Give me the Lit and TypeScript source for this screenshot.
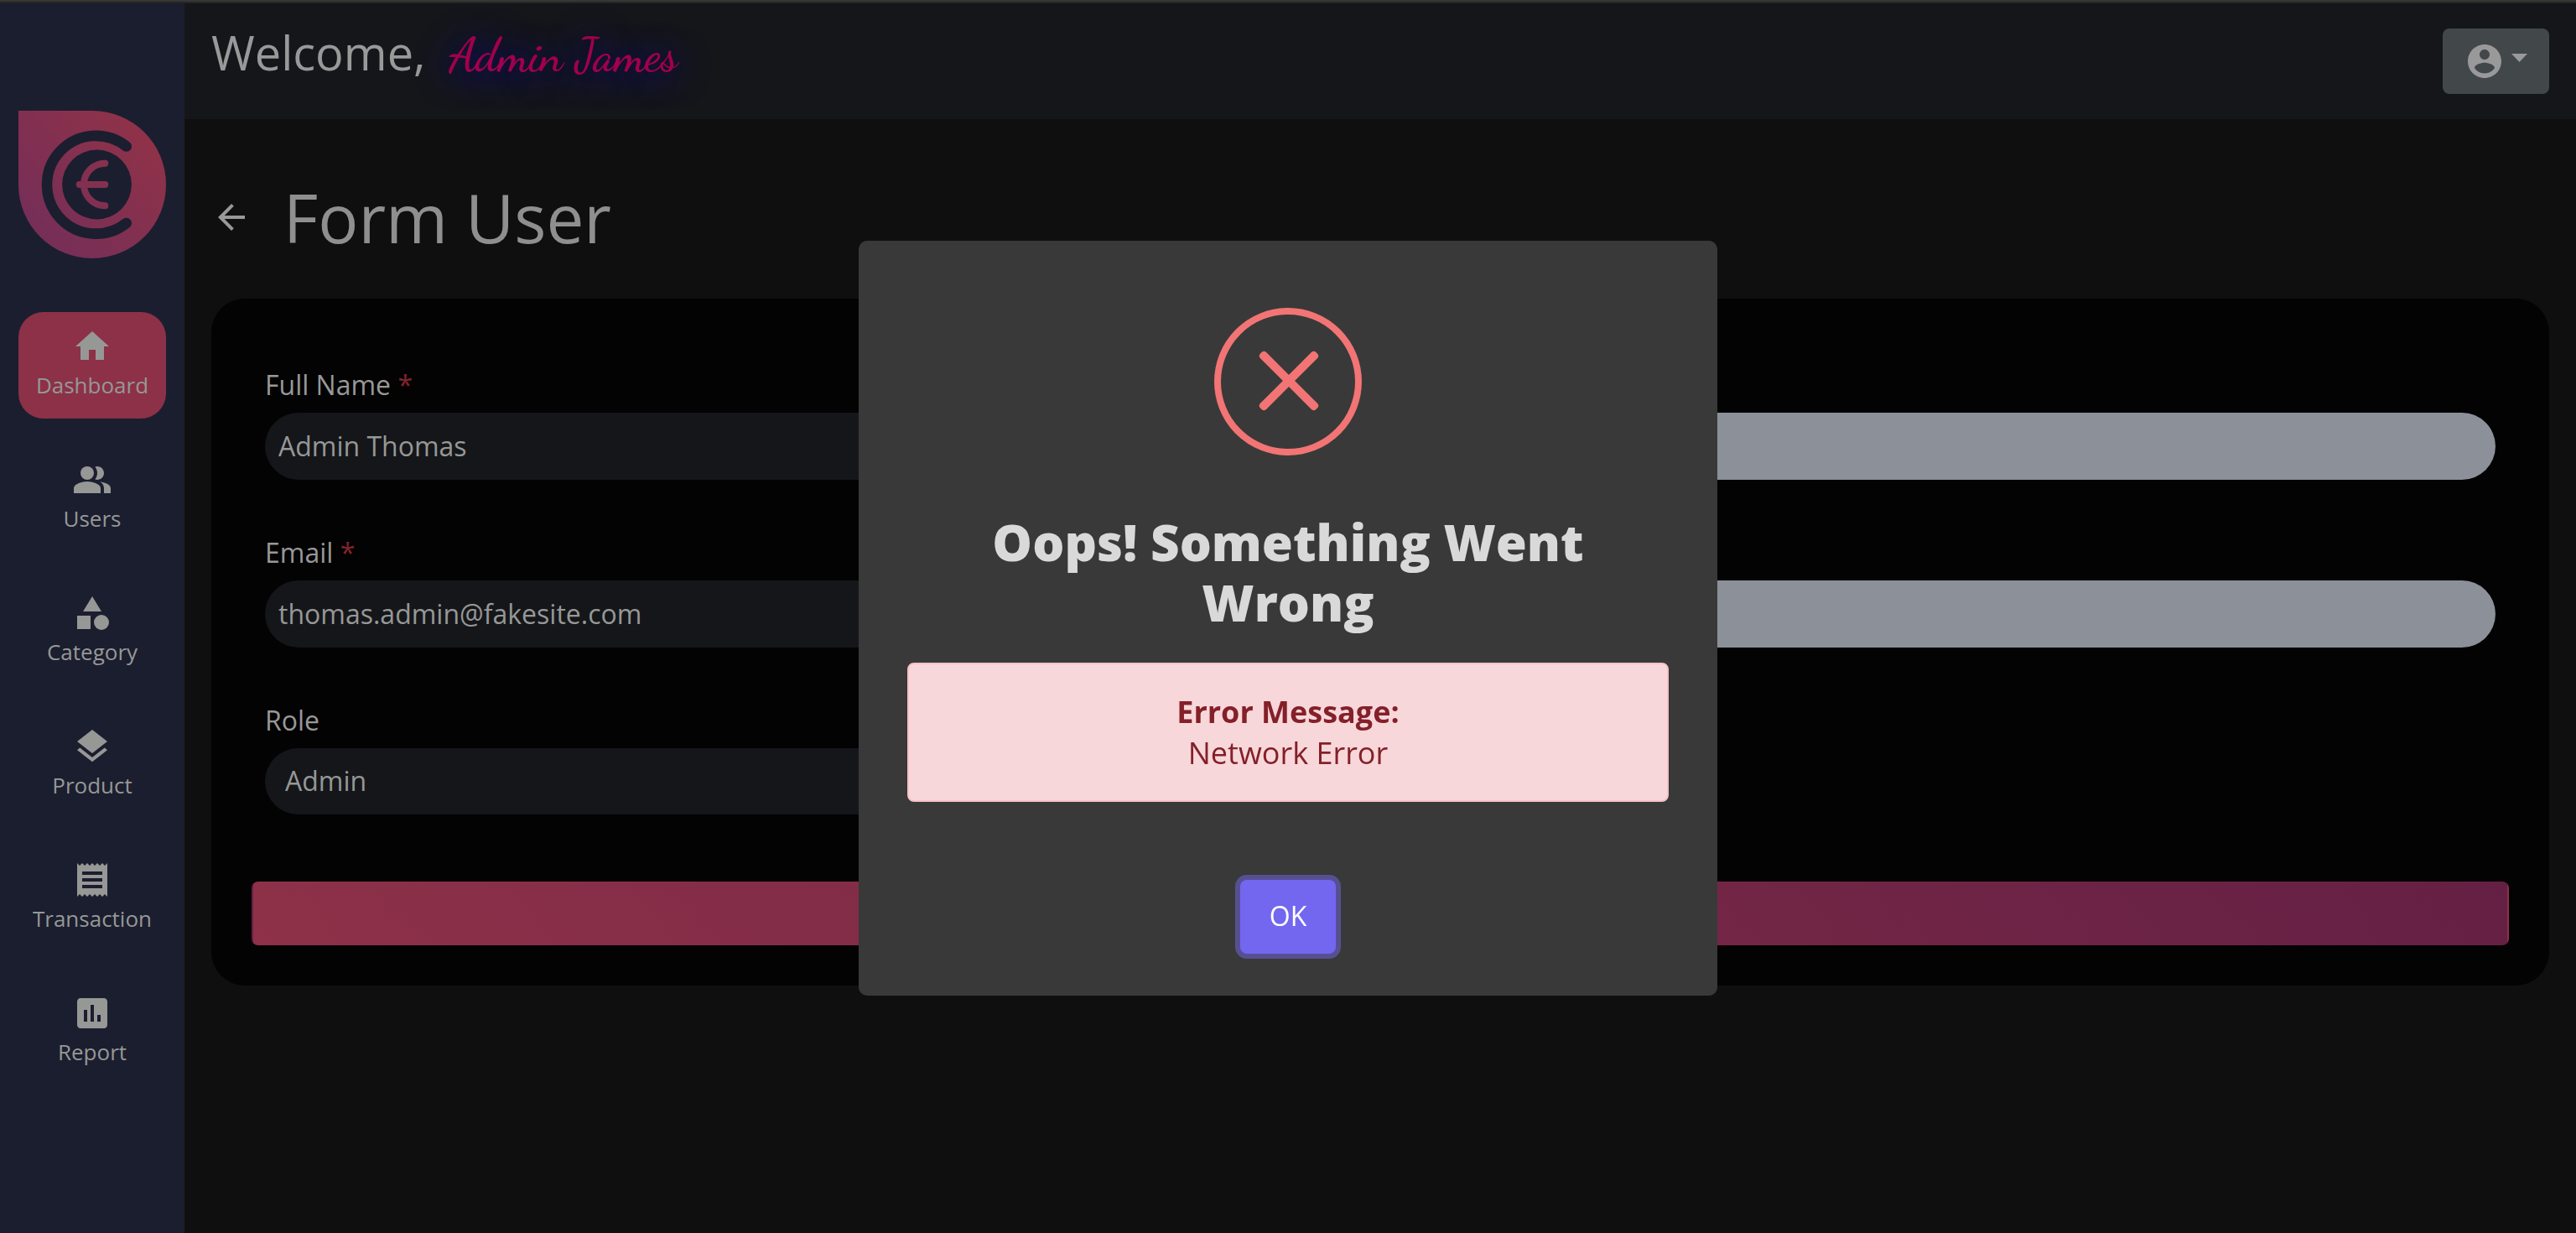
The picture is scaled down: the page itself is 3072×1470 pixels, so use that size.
import { LitElement, html, css, svg } from "lit";
import { customElement, property, state } from "lit/decorators.js";
import { classMap } from "lit/directives/class-map.js";

const icons: Record<string, unknown> = {
  home: svg`<path d="M10 20v-6h4v6h5v-8h3L12 3 2 12h3v8z"/>`,
  users: svg`<circle cx="9" cy="8" r="4"/><path d="M9 13c-2.67 0-8 1.34-8 4v3h16v-3c0-2.66-5.33-4-8-4z"/><path d="M16.67 13.13C18.04 14.06 19 15.32 19 17v3h4v-3c0-2.18-3.57-3.47-6.33-3.87z"/><path d="M15 12c2.21 0 4-1.79 4-4s-1.79-4-4-4c-.47 0-.91.1-1.33.24C14.5 5.27 15 6.58 15 8s-.5 2.73-1.33 3.76c.42.14.86.24 1.33.24z"/>`,
  category: svg`<path d="M12 2l-5.5 9h11z"/><circle cx="17.5" cy="17.5" r="4.5"/><path d="M3 13.5h8v8H3z"/>`,
  layers: svg`<path d="M11.99 18.54l-7.37-5.73L3 14.07l9 7 9-7-1.63-1.27-7.38 5.74zM12 16l7.36-5.73L21 9l-9-7-9 7 1.63 1.27L12 16z"/>`,
  receipt: svg`<path d="M18 17H6v-2h12v2zm0-4H6v-2h12v2zm0-4H6V7h12v2zM3 22l1.5-1.5L6 22l1.5-1.5L9 22l1.5-1.5L12 22l1.5-1.5L15 22l1.5-1.5L18 22l1.5-1.5L21 22V2l-1.5 1.5L18 2l-1.5 1.5L15 2l-1.5 1.5L12 2l-1.5 1.5L9 2 7.5 3.5 6 2 4.5 3.5 3 2v20z"/>`,
  report: svg`<path d="M19 3H5c-1.1 0-2 .9-2 2v14c0 1.1.9 2 2 2h14c1.1 0 2-.9 2-2V5c0-1.1-.9-2-2-2zM9 17H7v-7h2v7zm4 0h-2V7h2v10zm4 0h-2v-4h2v4z"/>`,
  account: svg`<path d="M12 2C6.48 2 2 6.48 2 12s4.48 10 10 10 10-4.48 10-10S17.52 2 12 2zm0 3c1.66 0 3 1.34 3 3s-1.34 3-3 3-3-1.34-3-3 1.34-3 3-3zm0 14.2c-2.5 0-4.71-1.28-6-3.22.03-1.99 4-3.08 6-3.08 1.99 0 5.97 1.09 6 3.08-1.29 1.94-3.5 3.22-6 3.22z"/>`,
  back: svg`<path d="M20 11H7.83l5.59-5.59L12 4l-8 8 8 8 1.41-1.41L7.83 13H20v-2z"/>`,
};

const icon = (name: string) =>
  html`<svg class="icon" viewBox="0 0 24 24" width="48" height="48" fill="currentColor" aria-hidden="true">${icons[name]}</svg>`;

@customElement("app-sidebar")
class AppSidebar extends LitElement {
  @property() active = "Dashboard";

  private items = [
    ["home", "Dashboard"],
    ["users", "Users"],
    ["category", "Category"],
    ["layers", "Product"],
    ["receipt", "Transaction"],
    ["report", "Report"],
  ];

  static styles = css`
    :host {
      display: block;
      box-sizing: border-box;
      padding: 128px 22px 0;
      background: #1b1e2f;
    }
    .logo {
      display: block;
      width: 100%;
    }
    .menu {
      display: flex;
      flex-direction: column;
      gap: 32px;
      margin-top: 64px;
    }
    .item {
      display: flex;
      flex-direction: column;
      align-items: center;
      box-sizing: border-box;
      height: 127px;
      padding-top: 17px;
      border-radius: 30px;
      color: #969896;
      font-size: 26px;
      line-height: 44px;
      text-decoration: none;
    }
    .item.active {
      background: #8c3148;
    }
    .icon {
      display: block;
      flex: none;
    }
  `;

  render() {
    return html`
      <svg class="logo" viewBox="0 0 176 176" role="img" aria-label="Logo">
        <defs>
          <linearGradient id="brand" x1="20" y1="150" x2="150" y2="30" gradientUnits="userSpaceOnUse">
            <stop offset="0" stop-color="#752e58" />
            <stop offset="1" stop-color="#8f3249" />
          </linearGradient>
        </defs>
        <path d="M0 0H88A88 88 0 1 1 0 88Z" fill="url(#brand)" />
        <path d="M128.7 42.5A58.4 58.4 0 1 0 128.7 134" fill="none" stroke="#1b1e2f" stroke-width="12.6" stroke-linecap="round" />
        <circle cx="93.5" cy="88" r="41.4" fill="#1b1e2f" />
        <path d="M103.3 62.7A25.3 25.3 0 0 0 103.3 113.3M72.7 88H103.3" fill="none" stroke="url(#brand)" stroke-width="7.9" stroke-linecap="round" />
      </svg>
      <nav class="menu">
        ${this.items.map(
          ([glyph, label]) => html`<a href="#" class=${classMap({ item: true, active: label === this.active })}>${icon(glyph)}<span>${label}</span></a>`,
        )}
      </nav>
    `;
  }
}

@customElement("app-header")
class AppHeader extends LitElement {
  @property() name = "";

  static styles = css`
    :host {
      display: flex;
      justify-content: space-between;
      align-items: flex-start;
      box-sizing: border-box;
      height: 138px;
      padding: 16px 32px 0;
      background: #15161a;
    }
    .welcome {
      display: flex;
      align-items: baseline;
      gap: 28px;
      margin: 0;
      color: #999;
      font-size: 56px;
      font-weight: 400;
      line-height: 84px;
    }
    .name {
      color: #a0004b;
      font-family: "Dancing Script", cursive;
      font-weight: 600;
      text-shadow: 0 4px 40px #0808a0;
    }
    .account {
      display: flex;
      align-items: center;
      gap: 8px;
      height: 78px;
      margin-top: 14px;
      padding: 0 26px;
      border: 0;
      border-radius: 8px;
      background: #42474a;
      color: #999;
    }
    .caret {
      width: 19px;
      height: 10px;
      margin-bottom: 8px;
      background: #999;
      clip-path: polygon(0 0, 100% 0, 50% 100%);
    }
  `;

  render() {
    return html`
      <h1 class="welcome"><span>Welcome,</span><span class="name">${this.name}</span></h1>
      <button class="account" aria-label="Account">${icon("account")}<span class="caret"></span></button>
    `;
  }
}

@customElement("user-form")
class UserForm extends LitElement {
  static styles = css`
    .card {
      padding: 48px;
      border-radius: 40px;
      background: #030303;
    }
    .fields {
      display: grid;
      grid-template-columns: 1fr 1fr;
      gap: 64px 32px;
      padding: 32px 16px;
    }
    .field {
      display: flex;
      flex-direction: column;
      justify-content: flex-end;
      gap: 10px;
      color: #989898;
      font-size: 32px;
      line-height: 46px;
    }
    .required {
      color: #84232c;
    }
    .control {
      box-sizing: border-box;
      width: 100%;
      height: 80px;
      margin: 0;
      padding: 0 16px 2px;
      border: 0;
      border-radius: 40px;
      outline: 0;
      background: #15161a;
      color: #969896;
      font: inherit;
      appearance: none;
    }
    .control.plain {
      background: #8c9099;
    }
    .control.choice {
      height: 79px;
      padding: 0 24px 2px;
    }
    .submit {
      display: block;
      width: 100%;
      height: 76px;
      margin-top: 48px;
      border: 2px solid transparent;
      border-radius: 8px;
      background: linear-gradient(45deg, #8e3149, #642044);
    }
  `;

  render() {
    return html`
      <form class="card" @submit=${(e: Event) => e.preventDefault()}>
        <div class="fields">
          <div class="field">
            <label for="name">Full Name <span class="required">*</span></label>
            <input class="control" id="name" type="text" value="Admin Thomas" />
          </div>
          <div class="field">
            <input class="control plain" type="password" aria-label="Password" />
          </div>
          <div class="field">
            <label for="email">Email <span class="required">*</span></label>
            <input class="control" id="email" type="email" value="thomas.admin@fakesite.com" />
          </div>
          <div class="field">
            <input class="control plain" type="password" aria-label="Confirm password" />
          </div>
          <div class="field">
            <label for="role">Role</label>
            <select class="control choice" id="role">
              <option>Admin</option>
            </select>
          </div>
        </div>
        <button class="submit" type="submit" aria-label="Save"></button>
      </form>
    `;
  }
}

@customElement("error-dialog")
class ErrorDialog extends LitElement {
  @property() heading = "";
  @property() message = "";

  static styles = css`
    :host {
      position: fixed;
      inset: 4px 0 0;
      display: flex;
      align-items: center;
      justify-content: center;
    }
    .popup {
      display: flex;
      flex-direction: column;
      align-items: center;
      box-sizing: border-box;
      width: 1024px;
      max-width: 100%;
      padding: 80px 0 50px;
      border-radius: 10px;
      background: #393939;
    }
    .mark {
      width: 176px;
      height: 176px;
    }
    .title {
      margin: 0;
      padding: 67px 60px 0;
      color: #d9d9d9;
      font-size: 60px;
      font-weight: 800;
      line-height: 72px;
      text-align: center;
    }
    .alert {
      align-self: stretch;
      margin: 36px 58px 93px;
      padding: 32px;
      border: 2px solid #f5c2c7;
      border-radius: 8px;
      background: #f8d7da;
      color: #842029;
      font-size: 36px;
      line-height: 49px;
      text-align: center;
    }
    .message {
      margin: 0;
    }
    .strong {
      font-weight: 700;
    }
    .ok {
      padding: 20px 35px 22px;
      border: 0;
      border-radius: 8px;
      outline: 0;
      background: #7367f0;
      box-shadow: 0 0 0 6px #565093;
      color: #fff;
      font: inherit;
      font-size: 32px;
      line-height: 46px;
    }
  `;

  render() {
    return html`
      <div class="popup" role="dialog" aria-modal="true" aria-labelledby="title">
        <svg class="mark" viewBox="0 0 176 176" fill="#f27474" aria-hidden="true">
          <circle cx="88" cy="88" r="84" fill="none" stroke="#f27474" stroke-width="8" />
          <rect x="42" y="82" width="94" height="10" rx="4" transform="rotate(45 89 87)" />
          <rect x="42" y="82" width="94" height="10" rx="4" transform="rotate(-45 89 87)" />
        </svg>
        <h2 class="title" id="title">${this.heading}</h2>
        <div class="alert" role="alert">
          <p class="message strong">Error Message:</p>
          <p class="message">${this.message}</p>
        </div>
        <button class="ok" @click=${() => this.dispatchEvent(new CustomEvent("dismiss"))}>OK</button>
      </div>
    `;
  }
}

@customElement("app-root")
class AppRoot extends LitElement {
  @state() private failed = true;

  static styles = css`
    :host {
      display: block;
      font-family: "Open Sans", sans-serif;
    }
    .page {
      display: grid;
      grid-template-columns: 220px 1fr;
      grid-template-rows: auto 1fr;
      min-height: 100vh;
      background: #0f0f0f;
    }
    .strip {
      grid-column: 1 / -1;
      height: 2px;
      border-top: 2px solid #363634;
      background: #242424;
    }
    .content {
      padding: 64px 32px 0;
    }
    .heading {
      display: flex;
      align-items: center;
      gap: 38px;
      margin-bottom: 44px;
      color: #8f8f8f;
    }
    .back {
      display: flex;
      color: #999;
    }
    .title {
      margin: 0;
      font-size: 80px;
      font-weight: 400;
      line-height: 106px;
    }
  `;

  render() {
    return html`
      <div class="page">
        <div class="strip"></div>
        <app-sidebar></app-sidebar>
        <main>
          <app-header name="Admin James"></app-header>
          <section class="content">
            <div class="heading">
              <a class="back" href="#" aria-label="Back">${icon("back")}</a>
              <h2 class="title">Form User</h2>
            </div>
            <user-form></user-form>
          </section>
        </main>
      </div>
      ${this.failed
        ? html`<error-dialog heading="Oops! Something Went Wrong" message="Network Error" @dismiss=${() => (this.failed = false)}></error-dialog>`
        : null}
    `;
  }
}
